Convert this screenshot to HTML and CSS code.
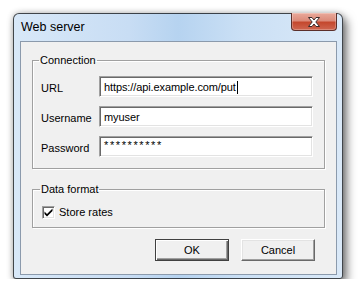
FILE: index.html
```html
<!DOCTYPE html>
<html lang="en">
<head>
  <meta charset="UTF-8">
  <title>Web server</title>
  <link rel="stylesheet" href="styles.css">
</head>
<body>
  <div class="window">
    <div class="titlebar">
      <span class="title">Web server</span>
      <button class="close" aria-label="Close">
        <svg width="16" height="12" viewBox="0 0 16 12">
          <path d="M2.5 1.5h3.5l2 2.5 2-2.5h3.5l-3.7 4.5 3.7 4.5h-3.5l-2-2.5-2 2.5h-3.5l3.7-4.5z" fill="#fff" stroke="#3a2a2a" stroke-width="1" stroke-linejoin="round"/>
        </svg>
      </button>
    </div>

    <div class="client">
      <fieldset class="group group-connection">
        <legend>Connection</legend>
        <div class="row">
          <label>URL</label>
          <div class="field">https://api.example.com/put<span class="caret"></span></div>
        </div>
        <div class="row">
          <label>Username</label>
          <div class="field">myuser</div>
        </div>
        <div class="row">
          <label>Password</label>
          <div class="field secret">**********</div>
        </div>
      </fieldset>

      <fieldset class="group group-format">
        <legend>Data format</legend>
        <label class="check">
          <span class="box">
            <svg width="9" height="9" viewBox="0 0 9 9">
              <path d="M0.5 3.5l2.5 2.5 5.5-5.5v2.5l-5.5 5.5-2.5-2.5z" fill="#000"/>
            </svg>
          </span>
          Store rates
        </label>
      </fieldset>

      <div class="buttons">
        <button class="btn btn-default">OK</button>
        <button class="btn">Cancel</button>
      </div>
    </div>
  </div>
</body>
</html>
```

FILE: styles.css
```css
body {
  margin: 0;
  background: #fff;
  font-family: "Liberation Sans", Arial, sans-serif;
  font-size: 11px;
  color: #000;
}
.window {
  margin: 13px 0 0 13px;
  width: 330px;
  height: 266px;
  box-sizing: border-box;
  padding: 0 5px 3px 6px;
  border: 1px solid rgba(0,0,0,0.7);
  border-radius: 6px 6px 3px 3px;
  background: linear-gradient(90deg, #d8e8f8 0%, #c8ddf4 35%, #b6d3f0 50%, #cbe0f5 70%, #dae9f8 100%);
  box-shadow: 4px 5px 10px rgba(0,0,0,0.5), 0 0 6px rgba(0,0,0,0.25);
  display: flex;
  flex-direction: column;
}
.titlebar {
  height: 27px;
  display: flex;
  justify-content: space-between;
  align-items: flex-start;
}
.title {
  padding: 5px 0 0 1px;
  font-size: 12.5px;
  line-height: 16px;
}
.close {
  width: 46px;
  height: 18px;
  margin-top: -1px;
  padding: 0;
  border: 1px solid #5b2f2a;
  border-top: none;
  border-radius: 0 0 4px 4px;
  background: linear-gradient(180deg, #e9a99b 0%, #dc8b7a 45%, #c4482e 55%, #cf6650 100%);
  box-shadow: inset 0 0 0 1px rgba(255,255,255,0.25);
  display: flex;
  align-items: center;
  justify-content: center;
}
.client {
  flex: 1;
  background: #f0f0f0;
  border: 1px solid #8b9aac;
  padding: 12px 11px 0;
}
.group {
  margin: 0;
  border: 1px solid #a0a0a0;
  box-shadow: inset 1px 1px #fff, 1px 1px #fff;
  padding: 9px 10px 11px 8px;
}
.group legend {
  padding: 0 1px;
  margin-left: -2px;
  line-height: 13px;
}
.group-format {
  margin-top: 14px;
  padding: 10px 10px 8px 9px;
}
.row {
  display: flex;
  align-items: center;
  margin-bottom: 9px;
}
.row:last-child {
  margin-bottom: 0;
}
.row label {
  width: 58px;
  padding-top: 3px;
}
.field {
  width: 214px;
  height: 21px;
  box-sizing: border-box;
  padding: 3px 4px;
  line-height: 14px;
  letter-spacing: -0.1px;
  background: #fff;
  border: 1px solid;
  border-color: #a0a0a0 #fff #fff #a0a0a0;
  box-shadow: inset 1px 1px #696969, inset -1px -1px #e3e3e3;
  white-space: nowrap;
}
.caret {
  display: inline-block;
  width: 1px;
  height: 13px;
  margin-left: 1px;
  background: #000;
  vertical-align: -3px;
}
.secret {
  padding-top: 1px;
  letter-spacing: 1.6px;
}
.check {
  display: flex;
  align-items: center;
  gap: 4px;
  line-height: 13px;
}
.box {
  width: 13px;
  height: 13px;
  box-sizing: border-box;
  background: #fff;
  border: 1px solid;
  border-color: #a0a0a0 #fff #fff #a0a0a0;
  box-shadow: inset 1px 1px #696969, inset -1px -1px #e3e3e3;
  display: flex;
  align-items: center;
  justify-content: center;
}
.buttons {
  display: flex;
  justify-content: flex-end;
  gap: 12px;
  margin-top: 11px;
  padding-right: 10px;
}
.btn {
  width: 74px;
  height: 22px;
  padding: 0;
  font-family: inherit;
  font-size: 11px;
  color: #000;
  background: #f0f0f0;
  border: 1px solid;
  border-color: #fff #696969 #696969 #fff;
  box-shadow: inset -1px -1px #a0a0a0, inset 1px 1px #e3e3e3;
}
.btn-default {
  border-color: #404040;
  box-shadow: inset 1px 1px #fff, inset -1px -1px #696969, inset -2px -2px #a0a0a0;
}
```
